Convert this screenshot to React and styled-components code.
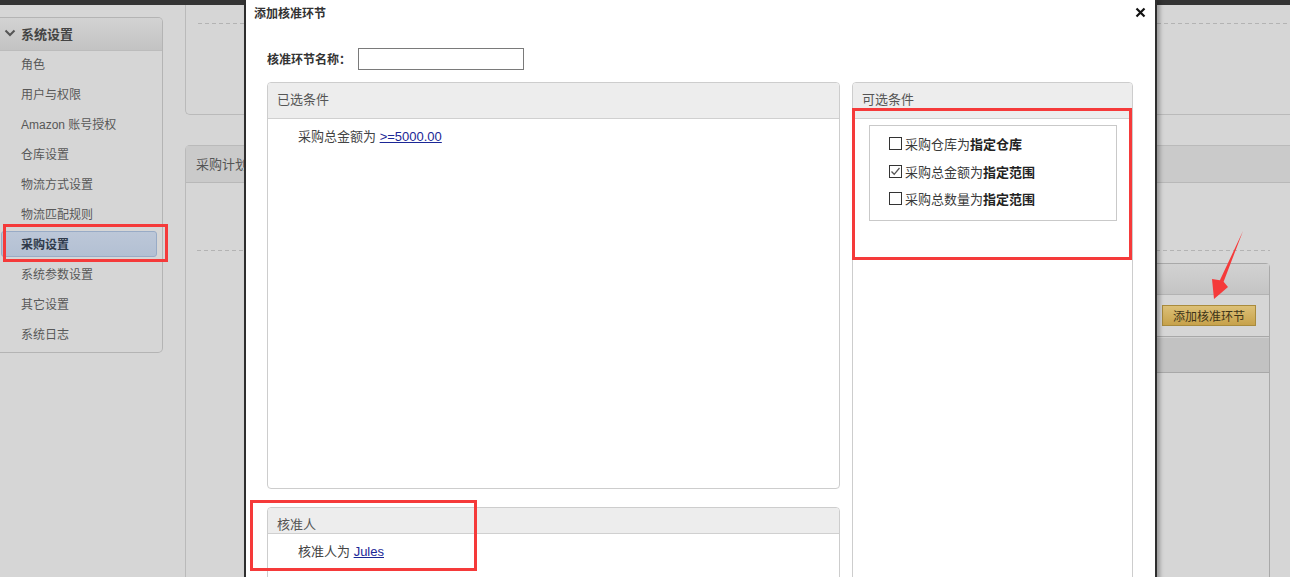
import React from "react";
import styled, { createGlobalStyle } from "styled-components";

const FONT = `"Liberation Sans", "Noto Sans CJK SC", sans-serif`;

const GlobalStyle = createGlobalStyle`
  html, body { margin: 0; padding: 0; }
  body { font-family: ${FONT}; background: #d6d6d6; }
  * { box-sizing: border-box; }
`;

const Page = styled.div`
  position: relative;
  width: 1290px;
  height: 577px;
  overflow: hidden;
  background: #d6d6d6;
`;

const TopBar = styled.div`
  height: 5px;
  background: #343434;
`;

const Main = styled.div`
  display: flex;
  align-items: flex-start;
`;

/* ---------- sidebar ---------- */
const Sidebar = styled.nav`
  flex-shrink: 0;
  width: 163px;
  height: 336px;
  margin-top: 12px;
  border: 1px solid #b4b4b4;
  border-left: none;
  border-radius: 0 5px 5px 0;
  overflow: hidden;
`;

const SideHeader = styled.div`
  display: flex;
  align-items: center;
  height: 33px;
  padding: 0 0 2px 4px;
  gap: 5px;
  background: linear-gradient(#d3d3d3, #c3c3c3);
  border-bottom: 1px solid #bcbcbc;
  font-size: 13px;
  font-weight: bold;
  color: #444;
`;

const SideItem = styled.div`
  height: 26px;
  margin: 0 5px 4px 1px;
  padding: 0 0 1px 19px;
  display: flex;
  align-items: center;
  font-size: 12px;
  color: ${(p) => (p.$active ? "#2f3a4a" : "#585858")};
  font-weight: ${(p) => (p.$active ? "bold" : "normal")};
  border: 1px solid ${(p) => (p.$active ? "#98abc6" : "transparent")};
  border-radius: 3px;
  background: ${(p) => (p.$active ? "linear-gradient(#bcc7d8, #b3c0d3)" : "transparent")};
`;

/* ---------- background content ---------- */
const Content = styled.div`
  flex: 1;
  margin-left: 22px;
  display: flex;
  flex-direction: column;
`;

const Dashed = styled.div`
  height: 1px;
  margin-left: ${(p) => p.$indent ?? 12}px;
  background: repeating-linear-gradient(90deg, #b3b3b3 0 4px, transparent 4px 7px);
`;

const TopPanel = styled.div`
  height: 110px;
  padding-top: 18px;
  border-left: 1px solid #bababa;
  border-bottom: 1px solid #bababa;
  border-bottom-left-radius: 5px;
`;

const PlanPanel = styled.section`
  margin-top: 30px;
  height: 440px;
  border-left: 1px solid #bababa;
  border-top: 1px solid #bababa;
  border-top-left-radius: 5px;
`;

const PlanHeader = styled.div`
  height: 37px;
  padding: 0 0 2px 10px;
  display: flex;
  align-items: center;
  background: #cacaca;
  border-bottom: 1px solid #b8b8b8;
  font-size: 13px;
  color: #555;
`;

const PlanBody = styled.div`
  padding: 67px 20px 0 11px;
`;

const FlowPanel = styled.div`
  margin: 12px 0 0 90px;
  height: 330px;
  border: 1px solid #a9a9a9;
  border-radius: 4px 4px 0 0;
`;

const FlowHeader = styled.div`
  height: 31px;
  background: linear-gradient(#d2d2d2, #c4c4c4);
  border-bottom: 1px solid #b3b3b3;
`;

const FlowToolbar = styled.div`
  height: 41px;
  display: flex;
  align-items: center;
  justify-content: flex-end;
  padding-right: 13px;
`;

const GoldButton = styled.button`
  height: 21px;
  width: 94px;
  padding: 0;
  border: 1px solid #a98b3c;
  background: linear-gradient(#dcc077, #c7a24b);
  font-family: ${FONT};
  font-size: 12px;
  color: #3e3418;
`;

const TableHead = styled.div`
  height: 37px;
  background: #c2c2c2;
  border-top: 1px solid #a8a8a8;
  border-bottom: 1px solid #a8a8a8;
  box-shadow: inset 0 1px 0 #d0d0d0;
`;

/* ---------- modal ---------- */
const Modal = styled.div`
  position: absolute;
  left: 244px;
  top: 0;
  width: 913px;
  height: 620px;
  background: #fff;
  border-left: 2px solid #2e2e2e;
  border-right: 2px solid #2e2e2e;
  box-shadow: 3px 0 4px rgba(0, 0, 0, 0.28);
`;

const ModalTitle = styled.div`
  height: 26px;
  display: flex;
  align-items: center;
  justify-content: space-between;
  padding: 0 9px 1px 8px;
  font-size: 12px;
  font-weight: bold;
  color: #333;
`;

const NameRow = styled.div`
  margin-top: 22px;
  padding-left: 21px;
  height: 22px;
  display: flex;
  align-items: center;
`;

const NameLabel = styled.label`
  font-size: 12px;
  font-weight: bold;
  color: #333;
  padding-bottom: 1px;
`;

const NameInput = styled.input`
  margin-left: 7px;
  width: 166px;
  height: 22px;
  border: 1px solid #7a7a7a;
  padding: 0 3px;
  font-family: ${FONT};
  font-size: 12px;
  outline: none;
`;

const Columns = styled.div`
  margin-top: 12px;
  padding-left: 21px;
  display: grid;
  grid-template-columns: 573px 281px;
  column-gap: 12px;
  align-items: start;
`;

const LeftColumn = styled.div`
  display: flex;
  flex-direction: column;
  gap: 18px;
`;

const Panel = styled.div`
  height: ${(p) => p.$h}px;
  border: 1px solid #cdcdcd;
  border-radius: 4px;
  background: #fff;
  overflow: hidden;
`;

const PanelHeader = styled.div`
  height: ${(p) => p.$h}px;
  padding: ${(p) => (p.$low ? "5px 0 0 9px" : "0 0 4px 9px")};
  display: flex;
  align-items: center;
  background: #ededed;
  border-bottom: 1px solid #d0d0d0;
  font-size: 13px;
  color: #555;
`;

const PanelBody = styled.div`
  padding: 8px 30px;
  font-size: 13px;
  line-height: 19px;
  color: #444;
`;

const Link = styled.a`
  color: #1b2796;
  text-decoration: underline;
`;

const OptionBox = styled.div`
  margin: 6px 15px 0 16px;
  padding: 4px 0 7px 19px;
  border: 1px solid #c9c9c9;
`;

const OptionRow = styled.label`
  height: 27.5px;
  display: flex;
  align-items: center;
  gap: 3px;
  font-size: 13px;
  color: #3a3a3a;
  b { color: #222; }
`;

const Box = styled.span`
  width: 13px;
  height: 13px;
  border: 1px solid #333;
  background: #fff;
  display: flex;
  align-items: center;
  justify-content: center;
`;

/* ---------- annotations ---------- */
const RedBox = styled.div`
  position: absolute;
  left: ${(p) => p.$x}px;
  top: ${(p) => p.$y}px;
  width: ${(p) => p.$w}px;
  height: ${(p) => p.$h}px;
  border: 3px solid #f53a3a;
  pointer-events: none;
`;

const ArrowSvg = styled.svg`
  position: absolute;
  left: 1205px;
  top: 225px;
  pointer-events: none;
`;

const Chevron = () => (
  <svg width="12" height="10" viewBox="0 0 12 10">
    <polyline points="1.5,2.5 6,7 10.5,2.5" fill="none" stroke="#555" strokeWidth="2" />
  </svg>
);

const CloseIcon = () => (
  <svg width="11" height="11" viewBox="0 0 11 11">
    <path d="M1.5 1.5 L9.5 9.5 M9.5 1.5 L1.5 9.5" stroke="#111" strokeWidth="2.2" />
  </svg>
);

const CheckBox = ({ checked }) => (
  <Box>
    {checked && (
      <svg width="11" height="11" viewBox="0 0 11 11">
        <polyline points="1.5,5.5 4.2,8.3 9.5,2" fill="none" stroke="#555" strokeWidth="1.3" />
      </svg>
    )}
  </Box>
);

const menu = [
  "角色",
  "用户与权限",
  "Amazon 账号授权",
  "仓库设置",
  "物流方式设置",
  "物流匹配规则",
  "采购设置",
  "系统参数设置",
  "其它设置",
  "系统日志",
];

const options = [
  { pre: "采购仓库为", strong: "指定仓库", checked: false },
  { pre: "采购总金额为", strong: "指定范围", checked: true },
  { pre: "采购总数量为", strong: "指定范围", checked: false },
];

export default function App() {
  return (
    <Page>
      <GlobalStyle />
      <TopBar />
      <Main>
        <Sidebar>
          <SideHeader>
            <Chevron />
            系统设置
          </SideHeader>
          {menu.map((m) => (
            <SideItem key={m} $active={m === "采购设置"}>
              {m}
            </SideItem>
          ))}
        </Sidebar>
        <Content>
          <TopPanel>
            <Dashed />
          </TopPanel>
          <PlanPanel>
            <PlanHeader>采购计划</PlanHeader>
            <PlanBody>
              <Dashed $indent={0} />
              <FlowPanel>
                <FlowHeader />
                <FlowToolbar>
                  <GoldButton>添加核准环节</GoldButton>
                </FlowToolbar>
                <TableHead />
              </FlowPanel>
            </PlanBody>
          </PlanPanel>
        </Content>
      </Main>

      <Modal>
        <ModalTitle>
          <span>添加核准环节</span>
          <CloseIcon />
        </ModalTitle>
        <NameRow>
          <NameLabel>核准环节名称：</NameLabel>
          <NameInput type="text" />
        </NameRow>
        <Columns>
          <LeftColumn>
            <Panel $h={407}>
              <PanelHeader $h={36}>已选条件</PanelHeader>
              <PanelBody>
                采购总金额为 <Link href="#">&gt;=5000.00</Link>
              </PanelBody>
            </Panel>
            <Panel $h={120}>
              <PanelHeader $h={26} $low>核准人</PanelHeader>
              <PanelBody>
                核准人为 <Link href="#">Jules</Link>
              </PanelBody>
            </Panel>
          </LeftColumn>
          <Panel $h={540}>
            <PanelHeader $h={36}>可选条件</PanelHeader>
            <OptionBox>
              {options.map((o) => (
                <OptionRow key={o.pre}>
                  <CheckBox checked={o.checked} />
                  <span>
                    {o.pre}
                    <b>{o.strong}</b>
                  </span>
                </OptionRow>
              ))}
            </OptionBox>
          </Panel>
        </Columns>
      </Modal>

      <RedBox $x={3} $y={224} $w={165} $h={38} />
      <RedBox $x={852} $y={108} $w={280} $h={152} />
      <RedBox $x={250} $y={500} $w={227} $h={71} />
      <ArrowSvg width="45" height="80" viewBox="1205 225 45 80">
        <polygon
          points="1243,231 1223.6,281.8 1228,287 1214,299 1212,279 1219.9,280.2"
          fill="#f53a3a"
        />
      </ArrowSvg>
    </Page>
  );
}
